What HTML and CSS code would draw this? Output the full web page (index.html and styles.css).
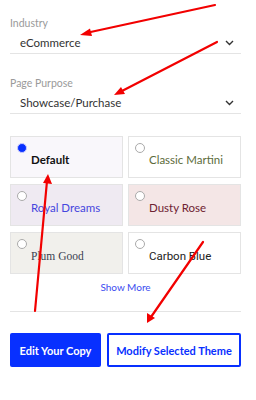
FILE: index.html
```html
<!DOCTYPE html>
<html lang="en">
<head>
    <meta charset="UTF-8">
    <meta name="viewport" content="width=device-width, initial-scale=1.0">
    <title>Choose Theme</title>
    <link rel="stylesheet" href="styles.css">
</head>
<body>
    <div class="panel">
        <div class="field">
            <label class="field-label">Industry</label>
            <div class="select">
                <span>eCommerce</span>
                <svg class="chevron" width="9" height="6" viewBox="0 0 9 6"><polyline points="1,1 4.5,4.5 8,1" fill="none" stroke="#333" stroke-width="1.4"/></svg>
            </div>
        </div>

        <div class="field field-second">
            <label class="field-label">Page Purpose</label>
            <div class="select">
                <span>Showcase/Purchase</span>
                <svg class="chevron" width="9" height="6" viewBox="0 0 9 6"><polyline points="1,1 4.5,4.5 8,1" fill="none" stroke="#333" stroke-width="1.4"/></svg>
            </div>
        </div>

        <div class="themes">
            <div class="theme theme-default">
                <span class="radio checked"></span>
                <span class="theme-name">Default</span>
            </div>
            <div class="theme theme-martini">
                <span class="radio"></span>
                <span class="theme-name">Classic Martini</span>
            </div>
            <div class="theme theme-royal">
                <span class="radio"></span>
                <span class="theme-name">Royal Dreams</span>
            </div>
            <div class="theme theme-rose">
                <span class="radio"></span>
                <span class="theme-name">Dusty Rose</span>
            </div>
            <div class="theme theme-plum">
                <span class="radio"></span>
                <span class="theme-name">Plum Good</span>
            </div>
            <div class="theme theme-carbon">
                <span class="radio"></span>
                <span class="theme-name">Carbon Blue</span>
            </div>
        </div>

        <div class="show-more">Show More</div>

        <div class="actions">
            <button class="btn btn-primary">Edit Your Copy</button>
            <button class="btn btn-outline">Modify Selected Theme</button>
        </div>
    </div>

    <!-- annotation arrows -->
    <svg class="arrows" width="256" height="400" viewBox="0 0 256 400">
        <g stroke="#f20000" stroke-width="2.2" stroke-linecap="round">
            <line x1="215" y1="5" x2="86" y2="33"/>
            <line x1="217" y1="42" x2="120" y2="92"/>
            <line x1="35" y1="311" x2="47" y2="181"/>
            <line x1="203" y1="242" x2="151" y2="317"/>
        </g>
        <g fill="#f20000">
            <polygon points="80,35 90,28.5 92,36"/>
            <polygon points="114,95 121,87 125,94"/>
            <polygon points="48,174 43,183 52,184"/>
            <polygon points="147,323 147,313 155,318"/>
        </g>
    </svg>
</body>
</html>
```

FILE: styles.css
```css
:root {
    --blue: #0830ff;
    --line: #e4e4e4;
}

body {
    margin: 0;
    width: 256px;
    height: 400px;
    position: relative;
    background: #fff;
    font-family: Lato, "Open Sans", sans-serif;
    color: #222;
}

.panel {
    padding: 16px 15px 0 10px;
}

.field-label {
    display: block;
    font-size: 10.5px;
    line-height: 14px;
    color: #9a9a9a;
}

.field-second {
    margin-top: 22px;
}

.select {
    display: flex;
    align-items: center;
    justify-content: space-between;
    height: 21px;
    margin-top: 2px;
    padding: 0 7px 0 10px;
    font-size: 11.5px;
    color: #333;
    border-bottom: 1px solid var(--line);
}

.themes {
    display: grid;
    grid-template-columns: 113px 113px;
    grid-auto-rows: 42px;
    gap: 6px 5px;
    margin-top: 22px;
}

.theme {
    display: flex;
    flex-direction: column;
    align-items: flex-start;
    padding: 6px 6px 0 6px;
    border: 1px solid var(--line);
    box-sizing: border-box;
}

.radio {
    width: 10px;
    height: 10px;
    border: 1px solid #aaa;
    border-radius: 50%;
    box-sizing: border-box;
    background: #fff;
}

.radio.checked {
    border: 1px solid #c8c8ff;
    background: var(--blue);
}

.theme-name {
    margin: 0 0 0 14px;
    font-size: 11.5px;
    line-height: 14px;
}

.theme-default { background: #f9f7fb; }
.theme-default .theme-name { font-weight: bold; color: #111; }

.theme-martini { background: #fff; }
.theme-martini .theme-name { color: #5c6b3a; }

.theme-royal { background: #efeaf2; }
.theme-royal .theme-name { color: #4646de; }

.theme-rose { background: #f4e6e6; }
.theme-rose .theme-name { color: #6e2232; }

.theme-plum { background: #f1f0ec; }
.theme-plum .theme-name {
    font-family: "Liberation Serif", serif;
    color: #3b3f50;
}

.theme-carbon { background: #fff; }
.theme-carbon .theme-name {
    font-family: Roboto, sans-serif;
    color: #222;
}

.show-more {
    text-align: center;
    font-size: 10px;
    line-height: 14px;
    color: #3b4cf0;
    margin-top: 6px;
    padding-bottom: 17px;
    border-bottom: 1px solid var(--line);
}

.actions {
    display: flex;
    gap: 6px;
    margin-top: 21px;
}

.btn {
    height: 34px;
    padding: 0;
    border-radius: 2px;
    font-family: Lato, sans-serif;
    font-weight: bold;
    font-size: 11px;
    white-space: nowrap;
    cursor: pointer;
}

.btn-primary {
    width: 91px;
    background: var(--blue);
    color: #fff;
    border: none;
}

.btn-outline {
    width: 134px;
    background: #fff;
    color: var(--blue);
    border: 2px solid var(--blue);
}

.arrows {
    position: absolute;
    top: 0;
    left: 0;
    pointer-events: none;
}
```
